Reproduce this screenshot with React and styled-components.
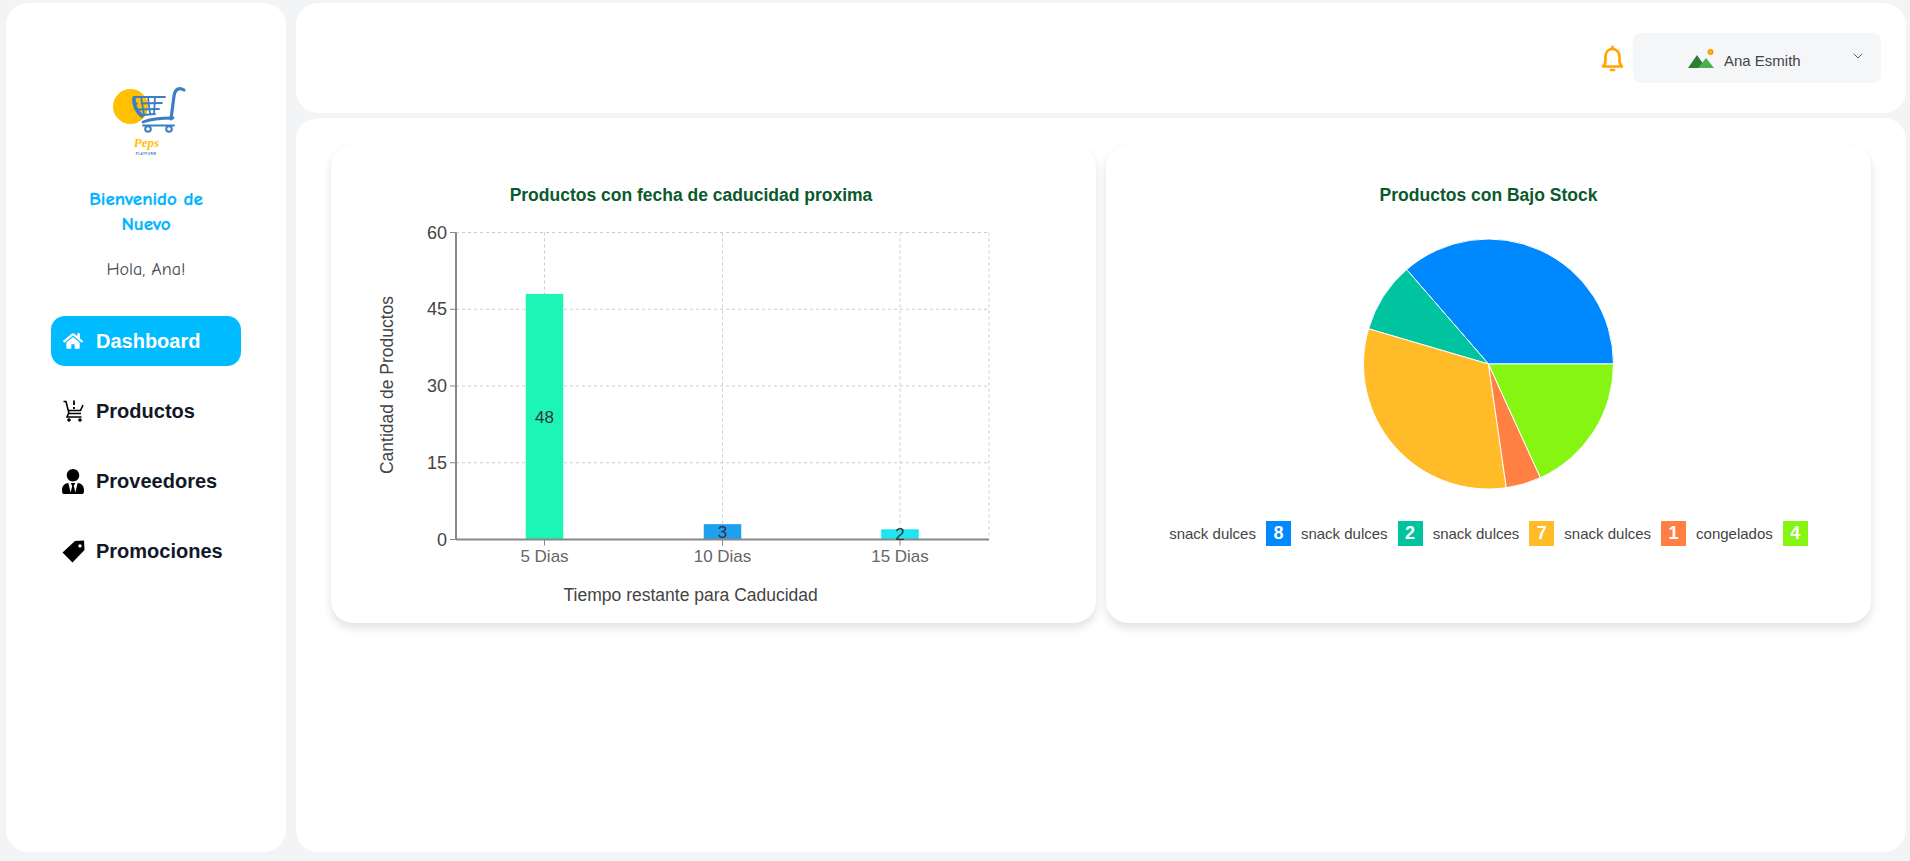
import { Fragment } from 'react'
import styled, { createGlobalStyle } from 'styled-components'
import { FaHome, FaUserTie } from 'react-icons/fa'
import { ChevronDown } from 'lucide-react'

const GlobalStyle = createGlobalStyle`
  html, body {
    margin: 0;
    padding: 0;
    background: #f3f4f6;
  }
  * {
    box-sizing: border-box;
  }
  body {
    font-family: "Liberation Sans", Arial, sans-serif;
  }
`

const Page = styled.div`
  display: grid;
  grid-template-columns: 280px 1fr;
  gap: 10px;
  height: 861px;
  padding: 3px 4px 9px 6px;
  overflow: hidden;
`

const Sidebar = styled.aside`
  display: flex;
  flex-direction: column;
  align-items: center;
  padding-top: 67px;
  background: #fff;
  border-radius: 22px;
`

const Logo = styled.svg`
  display: block;
  width: 100px;
  height: 100px;
`

const Welcome = styled.h2`
  width: 130px;
  margin: 17px 0 0;
  font-family: "Comic Sans MS", "Comic Neue", cursive;
  font-size: 19px;
  font-weight: 700;
  line-height: 25px;
  text-align: center;
  color: #00b4ff;
  -webkit-text-stroke: 0.3px #00b4ff;
`

const Hello = styled.p`
  margin: 21px 0 0;
  font-family: "Comic Sans MS", "Comic Neue", cursive;
  font-size: 18px;
  line-height: 24px;
  color: #444a55;
`

const Nav = styled.nav`
  display: flex;
  flex-direction: column;
  gap: 20px;
  width: 190px;
  margin-top: 34px;
`

const NavItem = styled.a`
  display: flex;
  align-items: center;
  gap: 11px;
  height: 50px;
  padding-left: 10px;
  border-radius: 14px;
  font-size: 20px;
  font-weight: 700;
  color: ${p => (p.$active ? '#fff' : '#111827')};
  background: ${p => (p.$active ? '#00bbff' : 'transparent')};
`

const NavIcon = styled.span`
  display: flex;
  align-items: center;
  justify-content: center;
  width: 24px;
  color: inherit;
`

const Content = styled.div`
  display: flex;
  flex-direction: column;
  gap: 5px;
  min-width: 0;
`

const TopBar = styled.header`
  display: flex;
  align-items: center;
  justify-content: flex-end;
  gap: 9px;
  height: 110px;
  padding-right: 25px;
  background: #fff;
  border-radius: 22px;
`

const UserSelect = styled.div`
  display: flex;
  align-items: center;
  width: 248px;
  height: 50px;
  padding: 0 15px 0 55px;
  background: #f5f6f8;
  border-radius: 8px;
`

const UserName = styled.span`
  margin: 4px 0 0 10px;
  font-size: 15px;
  color: #444;
`

const Arrow = styled.span`
  display: flex;
  margin: -5px 0 0 auto;
  color: #555;
`

const Main = styled.main`
  flex: 1;
  display: grid;
  grid-template-columns: 1fr 1fr;
  gap: 10px;
  align-content: start;
  padding: 27px 35px;
  background: #fff;
  border-radius: 22px;
`

const Card = styled.section`
  display: flex;
  flex-direction: column;
  align-items: center;
  height: 478px;
  padding-top: 40px;
  padding-right: ${p => p.$inset || 0}px;
  background: #fff;
  border-radius: 22px;
  box-shadow: 0 5px 10px rgba(0, 0, 0, 0.12);
`

const CardTitle = styled.h3`
  margin: 0;
  font-size: 17.5px;
  font-weight: 700;
  line-height: 20px;
  color: #0b5a2c;
`

const BarSvg = styled.svg`
  display: block;
  width: 720px;
  height: 418px;
  font-family: "Liberation Sans", Arial, sans-serif;
`

const PieSvg = styled.svg`
  display: block;
  width: 260px;
  height: 260px;
  margin-top: 29px;
`

const Legend = styled.div`
  display: flex;
  align-items: center;
  gap: 10px;
  margin-top: 27px;
`

const LegendLabel = styled.span`
  font-size: 15px;
  color: #444;
`

const LegendCount = styled.span`
  display: flex;
  align-items: center;
  justify-content: center;
  width: 25px;
  height: 25px;
  font-size: 18px;
  font-weight: 700;
  color: #fff;
  background: ${p => p.$color};
`

const bars = [
  { label: '5 Dias', value: 48, color: '#1cf5b5', x: 213.5 },
  { label: '10 Dias', value: 3, color: '#1f9ff0', x: 391.5 },
  { label: '15 Dias', value: 2, color: '#1de5f2', x: 569 },
]

const pie = [
  { label: 'snack dulces', value: 8, color: '#0088fe' },
  { label: 'snack dulces', value: 2, color: '#00c49f' },
  { label: 'snack dulces', value: 7, color: '#ffbb28' },
  { label: 'snack dulces', value: 1, color: '#ff8042' },
  { label: 'congelados', value: 4, color: '#87f512' },
]

// plot area, in svg coordinates
const plot = { left: 125, right: 658, top: 27.5, bottom: 334.5 }
const ticks = [0, 15, 30, 45, 60]
const yOf = v => plot.bottom - (v / 60) * (plot.bottom - plot.top)

function ExpiryChart() {
  return (
    <BarSvg viewBox="0 0 720 418">
      <g stroke="#ccc" strokeDasharray="3 3" fill="none">
        {ticks.slice(1).map(t => (
          <line key={t} x1={plot.left} x2={plot.right} y1={yOf(t)} y2={yOf(t)} />
        ))}
        {bars.map(b => (
          <line key={b.label} x1={b.x} x2={b.x} y1={plot.top} y2={plot.bottom} />
        ))}
        <line x1={plot.right} x2={plot.right} y1={plot.top} y2={plot.bottom} />
      </g>
      {bars.map(b => (
        <rect key={b.label} x={b.x - 18.75} width={37.5} y={yOf(b.value)} height={plot.bottom - yOf(b.value)} fill={b.color} />
      ))}
      <g stroke="#888" fill="none">
        <line x1={plot.left} x2={plot.left} y1={plot.top} y2={plot.bottom} strokeWidth="2" />
        <line x1={plot.left} x2={plot.right} y1={plot.bottom} y2={plot.bottom} strokeWidth="2" />
        {ticks.map(t => (
          <line key={t} x1={plot.left - 6} x2={plot.left} y1={yOf(t)} y2={yOf(t)} />
        ))}
        {bars.map(b => (
          <line key={b.label} x1={b.x} x2={b.x} y1={plot.bottom} y2={plot.bottom + 6} />
        ))}
      </g>
      <g fontSize="18" fill="#444" textAnchor="end">
        {ticks.map(t => (
          <text key={t} x={plot.left - 9} y={yOf(t) + 6}>{t}</text>
        ))}
      </g>
      <g fontSize="17" fill="#666" textAnchor="middle">
        {bars.map(b => (
          <text key={b.label} x={b.x} y={plot.bottom + 22}>{b.label}</text>
        ))}
      </g>
      <g fontSize="17" fill="#333" textAnchor="middle">
        {bars.map(b => (
          <text key={b.label} x={b.x} y={(yOf(b.value) + plot.bottom) / 2 + 6}>{b.value}</text>
        ))}
      </g>
      <text x="359.7" y="396" fontSize="17.5" fill="#444" textAnchor="middle">Tiempo restante para Caducidad</text>
      <text transform="translate(62 180) rotate(-90)" fontSize="17.5" fill="#444" textAnchor="middle">Cantidad de Productos</text>
    </BarSvg>
  )
}

function slicePath(cx, cy, r, from, to) {
  const rad = a => (a * Math.PI) / 180
  const x1 = cx + r * Math.cos(rad(from))
  const y1 = cy - r * Math.sin(rad(from))
  const x2 = cx + r * Math.cos(rad(to))
  const y2 = cy - r * Math.sin(rad(to))
  const big = to - from > 180 ? 1 : 0
  return `M${cx} ${cy}L${x1} ${y1}A${r} ${r} 0 ${big} 0 ${x2} ${y2}Z`
}

function StockPie() {
  const total = pie.reduce((sum, s) => sum + s.value, 0)
  let angle = 0
  return (
    <PieSvg viewBox="0 0 260 260">
      {pie.map((s, i) => {
        const from = angle
        angle += (s.value / total) * 360
        return <path key={i} d={slicePath(129.5, 130, 125, from, angle)} fill={s.color} stroke="#fff" strokeWidth="1" />
      })}
    </PieSvg>
  )
}

function CartLogo() {
  return (
    <Logo viewBox="0 0 100 100">
      <circle cx="34.5" cy="36.5" r="17.5" fill="#ffc000" />
      <g fill="none" stroke="#3a7fc4" strokeLinecap="round">
        <path d="M88 20C83 17 79 19 78 26L75 49" strokeWidth="3.2" />
        <path d="M47 52C57 48 68 48 77 48" strokeWidth="2.8" />
        <path d="M47 55.5H78" strokeWidth="1.8" />
        <circle cx="52" cy="59" r="2.8" strokeWidth="2" />
        <circle cx="73" cy="59" r="2.8" strokeWidth="2" />
        <path d="M38 28C37 35 41 42 46 46" strokeWidth="3.6" />
        <path d="M38 27L69 27M40 33.5L66 33M42.5 39.5L63 39M46 45L59 44" strokeWidth="1.8" />
        <path d="M45 27L48 45M52 27L54 44M59 27L58 43" strokeWidth="1.8" />
      </g>
      <path d="M41 29L44 29 45.5 37 42 36.5Z" fill="#ffc000" />
      <text x="50.5" y="76.5" textAnchor="middle" fontFamily="Liberation Serif, serif" fontStyle="italic" fontWeight="700" fontSize="13" fill="#ffc107">Peps</text>
      <text x="50" y="85" textAnchor="middle" fontFamily="Liberation Sans, sans-serif" fontWeight="700" fontSize="3.2" letterSpacing="0.4" fill="#3a7fc4">PLATFORM</text>
    </Logo>
  )
}

function CartIcon() {
  return (
    <svg width="21" height="22" viewBox="0 0 21 22" fill="none" stroke="#000">
      <path d="M0.5 1.5H3L6 13.5H18" strokeWidth="1.6" />
      <path d="M20 5L17.5 10.5H5" strokeWidth="1.6" />
      <path d="M11 0.5V5M11 7V9" strokeWidth="1.8" />
      <path d="M5.5 13.5L4 17H18.5" strokeWidth="1.6" />
      <circle cx="6" cy="20" r="1.8" fill="#000" stroke="none" />
      <circle cx="17" cy="20" r="1.8" fill="#000" stroke="none" />
    </svg>
  )
}

function TagIcon() {
  return (
    <svg width="23" height="23" viewBox="0 0 23 23">
      <path
        fillRule="evenodd"
        fill="#000"
        d="M13 1L22 0.5 22.5 10 10.5 22.5 0.5 12.5ZM18 4.2A1.7 1.7 0 1 0 18 7.6A1.7 1.7 0 1 0 18 4.2Z"
      />
    </svg>
  )
}

function BellIcon() {
  return (
    <svg width="23" height="27" viewBox="0 0 22 27" fill="none" stroke="#ffa500" strokeWidth="2.7" strokeLinecap="round" strokeLinejoin="round">
      <path d="M1.5 21.5H20.5C18.5 20 18 18.5 18 15V11.5C18 7 15 4 11 4S4 7 4 11.5V15C4 18.5 3.5 20 1.5 21.5Z" />
      <path d="M11 1.8V3.5" />
      <path d="M9.5 25H12.5" />
    </svg>
  )
}

function MountainIcon() {
  return (
    <svg width="26" height="19" viewBox="0 0 26 19">
      <path d="M0 19L9 6 18 19Z" fill="#2e7d32" />
      <path d="M10 19L18 9 26 19Z" fill="#4caf50" />
      <circle cx="22.5" cy="3" r="3" fill="#ff9800" />
      <circle cx="22.5" cy="3" r="1.4" fill="#ffc107" />
    </svg>
  )
}

export default function App() {
  return (
    <>
      <GlobalStyle />
      <Page>
        <Sidebar>
          <CartLogo />
          <Welcome>Bienvenido de Nuevo</Welcome>
          <Hello>Hola, Ana!</Hello>
          <Nav>
            <NavItem $active>
              <NavIcon><FaHome size={20} /></NavIcon>
              Dashboard
            </NavItem>
            <NavItem>
              <NavIcon><CartIcon /></NavIcon>
              Productos
            </NavItem>
            <NavItem>
              <NavIcon><FaUserTie size={25} color="#000" /></NavIcon>
              Proveedores
            </NavItem>
            <NavItem>
              <NavIcon><TagIcon /></NavIcon>
              Promociones
            </NavItem>
          </Nav>
        </Sidebar>
        <Content>
          <TopBar>
            <BellIcon />
            <UserSelect>
              <MountainIcon />
              <UserName>Ana Esmith</UserName>
              <Arrow><ChevronDown size={16} strokeWidth={1.4} /></Arrow>
            </UserSelect>
          </TopBar>
          <Main>
            <Card $inset={45}>
              <CardTitle>Productos con fecha de caducidad proxima</CardTitle>
              <ExpiryChart />
            </Card>
            <Card>
              <CardTitle>Productos con Bajo Stock</CardTitle>
              <StockPie />
              <Legend>
                {pie.map((s, i) => (
                  <Fragment key={i}>
                    <LegendLabel>{s.label}</LegendLabel>
                    <LegendCount $color={s.color}>{s.value}</LegendCount>
                  </Fragment>
                ))}
              </Legend>
            </Card>
          </Main>
        </Content>
      </Page>
    </>
  )
}
